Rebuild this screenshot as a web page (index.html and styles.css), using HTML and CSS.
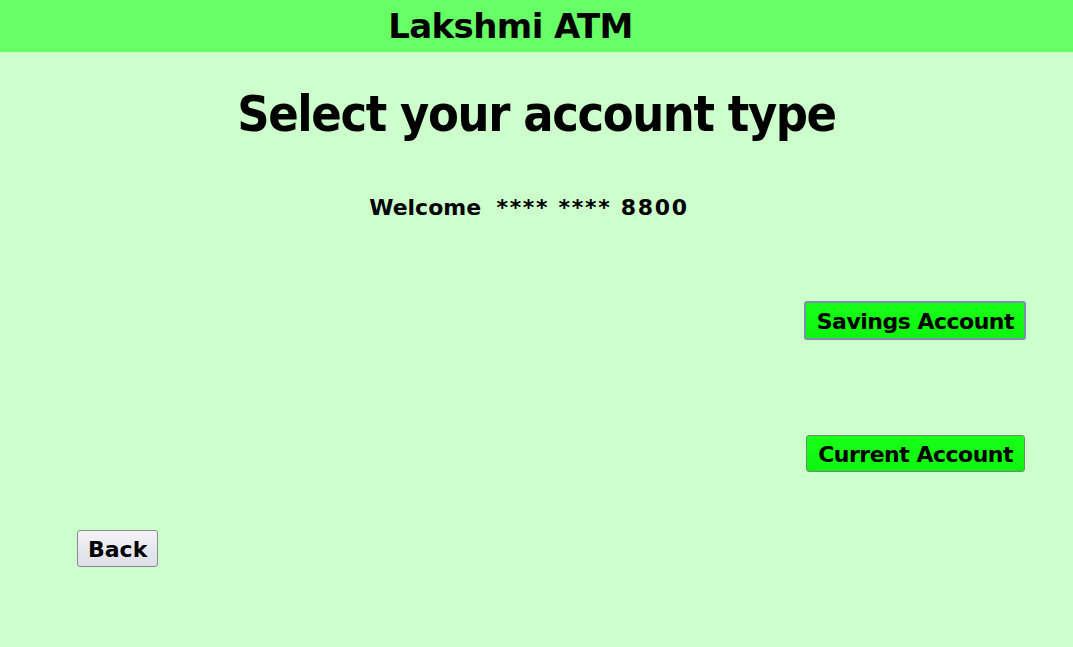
FILE: index.html
```html
<!DOCTYPE html>
<html>
<head>
<meta charset="utf-8">
<link rel="stylesheet" href="styles.css">
</head>
<body>
<header class="topbar"><span class="brand">Lakshmi ATM</span></header>
<main class="screen">
  <h1 class="title">Select your account type</h1>
  <p class="welcome">Welcome&nbsp;&nbsp;<span class="card">**** **** 8800</span></p>
  <div class="choices">
    <button class="btn btn-green btn-focus">Savings Account</button>
    <button class="btn btn-green btn-current">Current Account</button>
  </div>
  <div class="footer">
    <button class="btn btn-grey">Back</button>
  </div>
</main>
</body>
</html>
```
FILE: styles.css
```css
html, body {
  margin: 0;
  padding: 0;
  height: 100%;
}
body {
  background: #ccffcc;
  font-family: "DejaVu Sans", Verdana, sans-serif;
  font-weight: bold;
  color: #000;
  overflow: hidden;
}
.topbar {
  height: 52px;
  background: #66ff66;
  display: flex;
  justify-content: center;
  align-items: center;
  padding-right: 52px;
}
.brand {
  font-size: 34px;
  letter-spacing: -0.6px;
}
.screen {
  display: flex;
  flex-direction: column;
}
.title {
  margin: 32px 0 0;
  text-align: center;
  font-family: "DejaVu Sans Condensed", "DejaVu Sans", sans-serif;
  font-stretch: condensed;
  font-size: 50px;
  line-height: 60px;
  letter-spacing: -1.4px;
}
.welcome {
  margin: 50px 0 0;
  text-align: center;
  font-size: 22px;
  line-height: 28px;
  padding-right: 15px;
}
.card {
  letter-spacing: 1.7px;
}
.choices {
  display: flex;
  flex-direction: column;
  align-items: flex-end;
  padding-right: 47px;
  margin-top: 79px;
}
.btn {
  font-family: "DejaVu Sans", Verdana, sans-serif;
  font-weight: bold;
  font-size: 22px;
  letter-spacing: -0.5px;
  color: #000;
  border-radius: 3px;
  padding: 1px 11px 0;
  height: 37px;
  cursor: pointer;
}
.btn-green {
  background: linear-gradient(#18ff18, #0ef40e);
  border: 1px solid #6f8a6f;
}
.btn-focus {
  border: 2px solid #7d8fb0;
  height: 39px;
  padding: 1px 10px 0 11px;
}
.btn-current {
  margin-top: 95px;
  margin-right: 1px;
}
.footer {
  padding-left: 77px;
  margin-top: 58px;
}
.btn-grey {
  background: linear-gradient(#f4f4f8, #dcdde6);
  border: 1px solid #8a8a95;
  padding: 1px 10px 0;
  letter-spacing: 0;
}
```
